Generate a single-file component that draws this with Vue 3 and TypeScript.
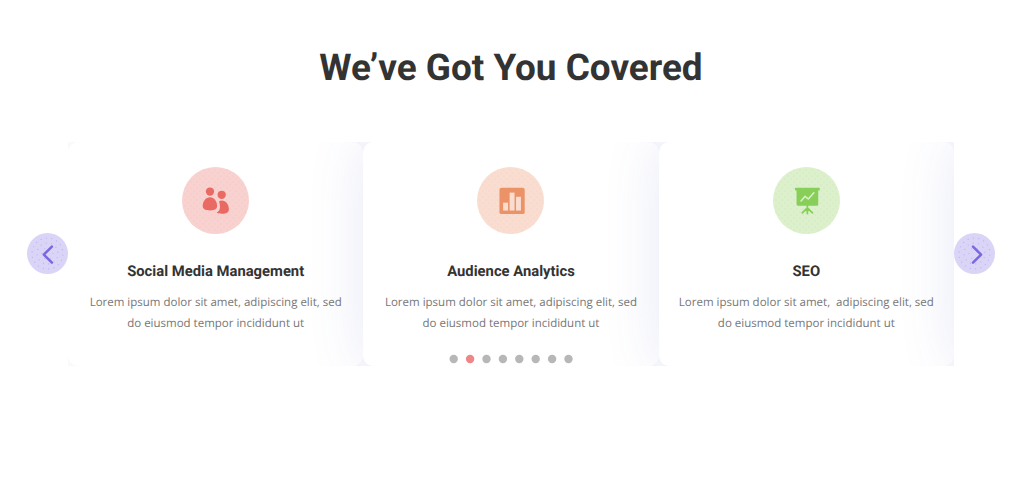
<template>
  <section class="services">
    <h2 class="heading">We’ve Got You Covered</h2>

    <div class="carousel">
      <button class="arrow" aria-label="Previous" @click="prev">
        <svg width="41" height="41" viewBox="0 0 41 41">
          <g class="speckle">
            <circle v-for="(s, i) in speckles" :key="i" :cx="s.x" :cy="s.y" r="0.6" />
          </g>
          <path d="M24.9 13.6 L16.8 21.6 L24.9 29.6" />
        </svg>
      </button>

      <div class="viewport">
        <div class="track">
          <article v-for="(card, i) in cards" :key="i" class="card">
            <div class="icon" :class="card.icon">
              <svg v-if="card.icon === 'people'" width="67" height="67" viewBox="0 0 68 68">
                <circle cx="28.4" cy="24.9" r="4.2" />
                <circle cx="40.3" cy="28.2" r="4.2" />
                <path d="M28.4 30.6c4.3 0 7.3 4.3 7.3 9.1 0 3.2-2.8 4.5-7.3 4.5s-7.4-1.3-7.4-4.5c0-4.8 3.1-9.1 7.4-9.1z" />
                <path d="M37.6 34.8c1-.5 1.8-.7 2.8-.7 4.2 0 7.2 4.2 7.2 8.7 0 3.1-2.5 4.7-7 4.7-2.5 0-4.5-.3-5.5-1.2 2.2-1 3.4-2.8 3.4-5.5 0-2.2-.3-4.2-.9-6z" />
              </svg>
              <svg v-else-if="card.icon === 'chart'" width="67" height="67" viewBox="0 0 68 68">
                <rect x="22.8" y="21" width="25.6" height="26.8" rx="2" />
                <rect class="bar" x="26.5" y="36.2" width="5" height="8" />
                <rect class="bar" x="33.1" y="26" width="5" height="18.2" />
                <rect class="bar" x="39.6" y="30.2" width="5" height="14" />
              </svg>
              <svg v-else width="67" height="67" viewBox="0 0 68 68">
                <rect x="22.3" y="21" width="25.2" height="2.8" rx="0.8" />
                <path d="M23.9 23h22v14.8a1.6 1.6 0 0 1-1.6 1.6H25.5a1.6 1.6 0 0 1-1.6-1.6z" />
                <path class="legs" d="M34.9 39v8.2M34.9 41.6l-5.2 5M34.9 41.6l5.2 5" />
                <path class="trend" d="M28.5 34.4l4.1-4.6 3.2 2.7 5.7-6.3" />
              </svg>
            </div>
            <h3>{{ card.title }}</h3>
            <p>{{ card.text }}<br />do eiusmod tempor incididunt ut</p>
          </article>
          <div class="card"></div>
        </div>
        <svg class="dots" width="126" height="10" viewBox="0 0 126 10">
          <circle
            v-for="n in 8"
            :key="n"
            class="dot"
            :class="{ active: n - 1 === current }"
            :cx="5.7 + (n - 1) * 16.4"
            cy="5"
            r="4.2"
            @click="current = n - 1"
          />
        </svg>
      </div>

      <button class="arrow" aria-label="Next" @click="next">
        <svg width="41" height="41" viewBox="0 0 41 41">
          <g class="speckle">
            <circle v-for="(s, i) in speckles" :key="i" :cx="s.x" :cy="s.y" r="0.6" />
          </g>
          <path d="M19 13.6 L27.1 21.6 L19 29.6" />
        </svg>
      </button>
    </div>
  </section>
</template>

<script setup lang="ts">
import { ref } from 'vue';

interface Card {
  icon: string;
  title: string;
  text: string;
}

const current = ref(1);

const cards: Card[] = [
  { icon: 'people', title: 'Social Media Management', text: 'Lorem ipsum dolor sit amet, adipiscing elit, sed' },
  { icon: 'chart', title: 'Audience Analytics', text: 'Lorem ipsum dolor sit amet, adipiscing elit, sed' },
  { icon: 'board', title: 'SEO', text: 'Lorem ipsum dolor sit amet,\u00a0 adipiscing elit, sed' },
];

// rings of small dots inside the arrow buttons
const speckles = [5.5, 10.5, 15.5].flatMap((r, ring) => {
  const count = 6 + ring * 6;
  return Array.from({ length: count }, (_, i) => {
    const angle = (i / count) * Math.PI * 2 + ring * 0.4;
    return { x: 20.5 + Math.cos(angle) * r, y: 20.5 + Math.sin(angle) * r };
  });
});

const prev = () => {
  current.value = (current.value + 7) % 8;
};

const next = () => {
  current.value = (current.value + 1) % 8;
};
</script>

<style>
body {
  background: #fff;
}
</style>

<style scoped>
.services {
  height: 480px;
  overflow: hidden;
  box-sizing: border-box;
  padding-top: 45px;
  text-rendering: geometricPrecision;
}

.heading {
  margin: 0 2px 49px 0;
  font-family: Roboto, sans-serif;
  font-size: 36.9px;
  line-height: 48px;
  font-weight: 700;
  text-align: center;
  color: #333;
}

.carousel {
  display: flex;
  align-items: center;
  padding: 0 29px 0 27px;
}

.arrow {
  flex: none;
  width: 41px;
  height: 41px;
  margin-bottom: 1px;
  padding: 0;
  border: none;
  border-radius: 50%;
  background: #dad4f7;
  cursor: pointer;
}

.arrow svg {
  display: block;
}

.arrow path {
  fill: none;
  stroke: #7a68e0;
  stroke-width: 2.5;
  stroke-linecap: round;
  stroke-linejoin: round;
}

.speckle {
  fill: #b9b0f0;
}

.viewport {
  position: relative;
  flex: 1;
  min-width: 0;
  height: 224px;
  overflow: hidden;
}

.track {
  display: flex;
  height: 100%;
}

.card {
  flex: 0 0 33.3333%;
  box-sizing: border-box;
  padding-top: 25px;
  border-radius: 10px;
  background: #fff;
  box-shadow: 0 0 56px rgba(80, 95, 190, 0.13);
  text-align: center;
}

.icon {
  width: 67px;
  height: 67px;
  margin: 0 auto;
  border-radius: 50%;
  background-position: 0 0, 3px 3px;
  background-size: 6px 6px;
}

.icon svg {
  display: block;
}

.people {
  background-color: #f8d2d0;
  background-image: radial-gradient(circle, #f7cbc4 0.5px, transparent 1px), radial-gradient(circle, #f7cbc4 0.5px, transparent 1px);
  fill: #e96a63;
}

.chart {
  background-color: #f9ddd0;
  background-image: radial-gradient(circle, #f7d6ca 0.5px, transparent 1px), radial-gradient(circle, #f7d6ca 0.5px, transparent 1px);
  fill: #ec9267;
}

.chart .bar {
  fill: #f9ddd0;
}

.board {
  background-color: #dcf0cb;
  background-image: radial-gradient(circle, #d4e9c8 0.5px, transparent 1px), radial-gradient(circle, #d4e9c8 0.5px, transparent 1px);
  fill: #88cf59;
}

.board .legs {
  fill: none;
  stroke: #88cf59;
  stroke-width: 1.8;
  stroke-linecap: round;
}

.board .trend {
  fill: none;
  stroke: #dcf0cb;
  stroke-width: 1.5;
  stroke-linecap: round;
  stroke-linejoin: round;
}

.card h3 {
  margin: 27px 0 12px;
  font-family: Roboto, sans-serif;
  font-size: 14.8px;
  line-height: 20px;
  font-weight: 700;
  color: #333;
}

.card p {
  margin: 0;
  font-family: 'Open Sans', sans-serif;
  font-size: 11.5px;
  line-height: 20.5px;
  white-space: nowrap;
  color: #777;
}

.dots {
  position: absolute;
  left: 50%;
  bottom: 2px;
  margin-left: -63px;
}

.dot {
  fill: #b7b7b7;
  cursor: pointer;
}

.dot.active {
  fill: #ee8686;
}
</style>
